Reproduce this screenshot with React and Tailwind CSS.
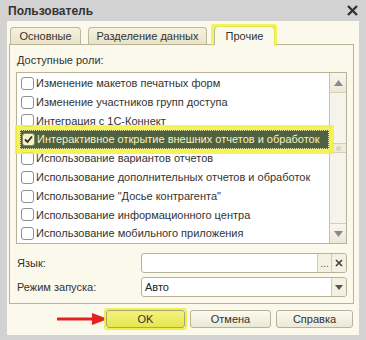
import React from "react";

const roles = [
  "Изменение макетов печатных форм",
  "Изменение участников групп доступа",
  "Интеграция с 1С-Коннект",
  "Интерактивное открытие внешних отчетов и обработок",
  "Использование вариантов отчетов",
  "Использование дополнительных отчетов и обработок",
  "Использование \"Досье контрагента\"",
  "Использование информационного центра",
  "Использование мобильного приложения",
];

function Check({ checked }) {
  return (
    <div
      className={
        "w-[13px] h-[13px] rounded-[3px] border shrink-0 flex items-center justify-center " +
        (checked ? "border-[#8a8a6a] bg-[#f6f3c4]" : "border-[#8f8f8f] bg-white")
      }
    >
      {checked && (
        <svg width="9" height="9" viewBox="0 0 9 9">
          <path d="M1 4.5 L3.5 7 L8 1.5" stroke="#2a2a2a" strokeWidth="1.8" fill="none" />
        </svg>
      )}
    </div>
  );
}

export default function App() {
  return (
    <div
      className="w-[366px] h-[340px] bg-[#d2d2d2] flex flex-col text-[11px] text-[#333]"
      style={{ fontFamily: '"Liberation Sans", Arial, sans-serif' }}
    >
      {/* title */}
      <div className="h-[21px] flex items-center justify-between pl-[8px] pr-[8px] shrink-0">
        <span className="font-bold text-[12px] text-[#333]">Пользователь</span>
        <svg width="11" height="11" viewBox="0 0 11 11">
          <path d="M1 1 L10 10 M10 1 L1 10" stroke="#333" strokeWidth="2.4" />
        </svg>
      </div>
      {/* body */}
      <div className="mx-[7px] h-[314px] bg-[#fbf9ec] flex flex-col relative">
        {/* tabs */}
        <div className="flex items-end h-[23px] pl-[3px] gap-[7px] relative">
          <div className="h-[17px] w-[71px] border border-b-0 border-[#bdb79c] rounded-t-[4px] bg-gradient-to-b from-[#f6f2df] to-[#e9e3c8] flex items-center justify-center">
            Основные
          </div>
          <div className="h-[17px] w-[119px] border border-b-0 border-[#bdb79c] rounded-t-[4px] bg-gradient-to-b from-[#f6f2df] to-[#e9e3c8] flex items-center justify-center">
            Разделение данных
          </div>
          <div className="relative h-[19px] w-[61px] border border-b-0 border-[#bdb79c] rounded-t-[4px] bg-[#fbf9ec] flex items-center justify-center -mb-[1px] z-10">
            Прочие
            <div className="absolute -left-[4px] -right-[3px] -top-[3px] bottom-[-1px] border-[3px] border-b-0 border-[#f2f23a]/80 rounded-t-[2px]" />
          </div>
        </div>
        {/* panel */}
        <div className="ml-[2px] mr-[5px] h-[260px] border border-[#b8b296] flex flex-col px-[6px]">
          <div className="h-[27px] flex items-end pb-[4px] pl-[1px]">Доступные роли:</div>
          <div className="h-[172px] border border-[#b8b296] bg-white flex">
            <div className="flex-1 min-w-0 flex flex-col pt-[1px]">
              {roles.map((r, i) => {
                const sel = i === 3;
                return (
                  <div
                    key={i}
                    className={
                      "h-[19px] flex items-center gap-[2px] whitespace-nowrap " +
                      (sel
                        ? "bg-[#4f6140] text-[#f6f2c0] outline-[5px] outline-solid outline-[#f2f23c]/85 border border-dotted border-[#e8e6b0] ml-[3px] pl-[1px] relative z-10"
                        : "pl-[4px]")
                    }
                  >
                    <Check checked={sel} />
                    <span>{r}</span>
                  </div>
                );
              })}
            </div>
            <div className="w-[17px] border-l border-[#c8c2a6] bg-[#f6f4ea] flex flex-col">
              <div className="h-[20px] border-b border-[#d4cfb6] bg-gradient-to-b from-[#f8f6ee] to-[#ece8d8] flex items-center justify-center">
                <svg width="9" height="6" viewBox="0 0 9 6"><path d="M0 6 L4.5 0 L9 6 Z" fill="#8a8a8a" /></svg>
              </div>
              <div className="h-[50px]" />
              <div className="h-[10px] border-y border-[#d4cfb6] bg-[#efebdc] flex items-center justify-center">
                <div className="w-[5px] h-[5px] rounded-full bg-[#d8d3c0]" />
              </div>
              <div className="flex-1" />
              <div className="h-[20px] border-t border-[#d4cfb6] bg-gradient-to-b from-[#f8f6ee] to-[#ece8d8] flex items-center justify-center">
                <svg width="9" height="6" viewBox="0 0 9 6"><path d="M0 0 L4.5 6 L9 0 Z" fill="#8a8a8a" /></svg>
              </div>
            </div>
          </div>
          {/* fields */}
          <div className="mt-[9px] flex items-center h-[20px]">
            <div className="w-[125px] pl-[1px]">Язык:</div>
            <div className="flex-1 h-[20px] border border-[#b8b296] rounded-[3px] bg-white flex justify-end">
              <div className="w-[14px] border-l border-[#d0cbb2] bg-[#f4f1e2] flex items-end justify-center pb-[3px] text-[#555] text-[10px] leading-none">...</div>
              <div className="w-[15px] border-l border-[#d0cbb2] bg-[#f4f1e2] rounded-r-[3px] flex items-center justify-center">
                <svg width="8" height="8" viewBox="0 0 8 8"><path d="M1 1 L7 7 M7 1 L1 7" stroke="#444" strokeWidth="1.7" /></svg>
              </div>
            </div>
          </div>
          <div className="mt-[4px] flex items-center h-[20px]">
            <div className="w-[125px] pl-[1px]">Режим запуска:</div>
            <div className="flex-1 h-[20px] border border-[#b8b296] rounded-[3px] bg-white flex">
              <div className="flex-1 pl-[3px] flex items-center text-[#222]">Авто</div>
              <div className="w-[15px] border-l border-[#d0cbb2] bg-[#f4f1e2] rounded-r-[3px] flex items-center justify-center">
                <svg width="8" height="5" viewBox="0 0 8 5"><path d="M0 0 L4 5 L8 0 Z" fill="#555" /></svg>
              </div>
            </div>
          </div>
        </div>
        {/* buttons */}
        <div className="flex justify-end items-center gap-[5px] pr-[6px] mt-[6px] h-[18px] relative">
          <svg className="absolute left-[50px] top-[2px]" width="52" height="14" viewBox="0 0 52 14">
            <path d="M1 7 L38 7" stroke="#e42222" strokeWidth="3" strokeLinecap="round" />
            <path d="M35 1 L51 7 L35 13 Z" fill="#e42222" />
          </svg>
          <div className="relative w-[79px] h-[18px] border border-[#a9a47a] rounded-[3px] bg-gradient-to-b from-[#f2f27a] to-[#e6e650] flex items-center justify-center text-[#333]">
            OK
            <div className="absolute -inset-[3px] border-[2px] border-[#f0f03a]/90 rounded-[3px]" />
          </div>
          <div className="w-[81px] h-[18px] border border-[#b8b296] rounded-[3px] bg-gradient-to-b from-[#fbfaf3] to-[#ece8d6] flex items-center justify-center">
            Отмена
          </div>
          <div className="w-[77px] h-[18px] border border-[#b8b296] rounded-[3px] bg-gradient-to-b from-[#fbfaf3] to-[#ece8d6] flex items-center justify-center">
            Справка
          </div>
        </div>
      </div>
    </div>
  );
}
